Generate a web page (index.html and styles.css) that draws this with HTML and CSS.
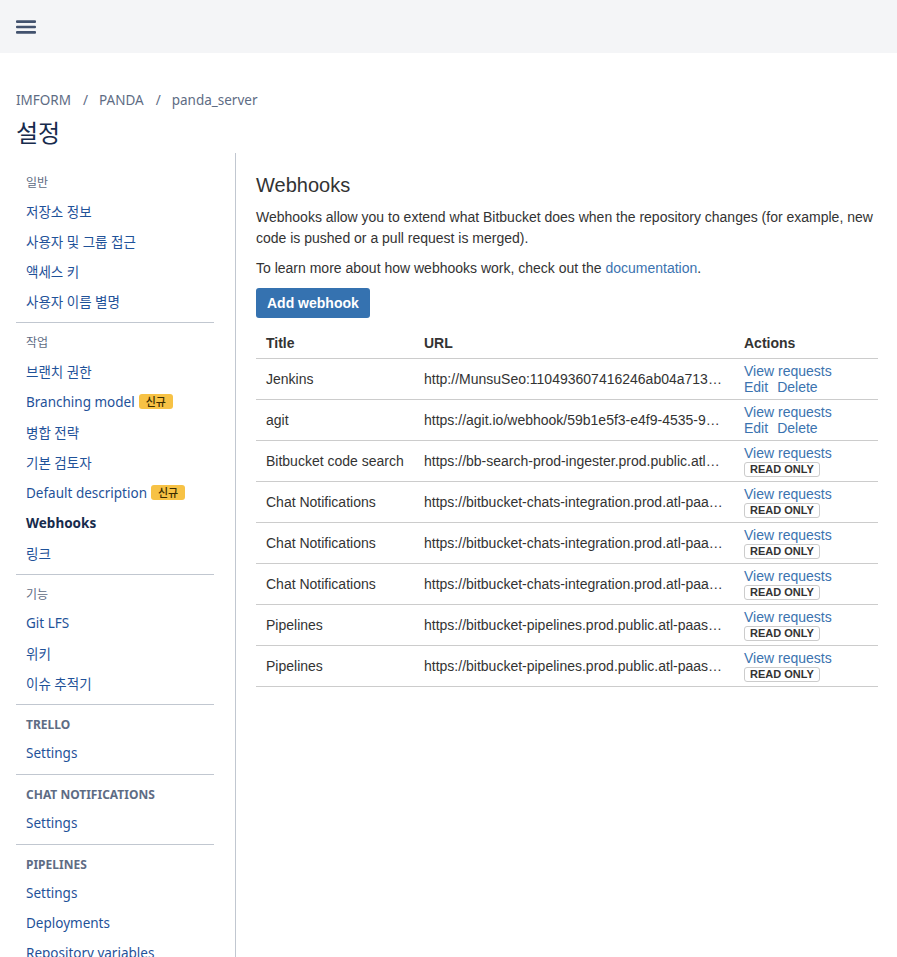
FILE: index.html
```html
<!DOCTYPE html>
<html lang="ko">
<head>
<meta charset="utf-8">
<title>설정 - Webhooks</title>
<link rel="stylesheet" href="styles.css">
</head>
<body>
<header class="topbar">
  <button class="menu-btn" aria-label="menu">
    <svg width="20" height="14" viewBox="0 0 20 14"><rect x="0" y="0.3" width="20" height="2.6" rx="1"/><rect x="0" y="5.7" width="20" height="2.6" rx="1"/><rect x="0" y="11.1" width="20" height="2.6" rx="1"/></svg>
  </button>
</header>
<div class="page">
  <nav class="breadcrumb">
    <a href="#">IMFORM</a><span class="sep">/</span><a href="#">PANDA</a><span class="sep">/</span><a href="#">panda_server</a>
  </nav>
  <h1 class="page-title">설정</h1>
  <div class="layout">
    <aside class="sidebar">
      <div class="nav-group">
        <div class="nav-heading ko">일반</div>
        <a class="nav-item" href="#">저장소 정보</a>
        <a class="nav-item" href="#">사용자 및 그룹 접근</a>
        <a class="nav-item" href="#">액세스 키</a>
        <a class="nav-item" href="#">사용자 이름 별명</a>
      </div>
      <div class="nav-group">
        <div class="nav-heading ko">작업</div>
        <a class="nav-item" href="#">브랜치 권한</a>
        <a class="nav-item with-lozenge" href="#">Branching model <span class="lozenge">신규</span></a>
        <a class="nav-item" href="#">병합 전략</a>
        <a class="nav-item" href="#">기본 검토자</a>
        <a class="nav-item with-lozenge" href="#">Default description <span class="lozenge">신규</span></a>
        <a class="nav-item active" href="#">Webhooks</a>
        <a class="nav-item" href="#">링크</a>
      </div>
      <div class="nav-group">
        <div class="nav-heading ko">기능</div>
        <a class="nav-item" href="#">Git LFS</a>
        <a class="nav-item" href="#">위키</a>
        <a class="nav-item" href="#">이슈 추적기</a>
      </div>
      <div class="nav-group">
        <div class="nav-heading">TRELLO</div>
        <a class="nav-item" href="#">Settings</a>
      </div>
      <div class="nav-group">
        <div class="nav-heading">CHAT NOTIFICATIONS</div>
        <a class="nav-item" href="#">Settings</a>
      </div>
      <div class="nav-group">
        <div class="nav-heading">PIPELINES</div>
        <a class="nav-item" href="#">Settings</a>
        <a class="nav-item" href="#">Deployments</a>
        <a class="nav-item" href="#">Repository variables</a>
      </div>
    </aside>
    <main class="content">
      <h2 class="content-title">Webhooks</h2>
      <p>Webhooks allow you to extend what Bitbucket does when the repository changes (for example, new code is pushed or a pull request is merged).</p>
      <p>To learn more about how webhooks work, check out the <a href="#">documentation</a>.</p>
      <button class="btn-primary">Add webhook</button>
      <table class="hooks">
        <colgroup><col class="c-title"><col class="c-url"><col class="c-actions"></colgroup>
        <thead>
          <tr><th>Title</th><th>URL</th><th>Actions</th></tr>
        </thead>
        <tbody>
          <tr><td>Jenkins</td><td>http://MunsuSeo:110493607416246ab04a71339a5e2c1d0f@jenkins.example.com/bitbucket-hook/</td><td><a class="act" href="#">View requests</a><span class="act-row"><a href="#">Edit</a><a href="#">Delete</a></span></td></tr>
          <tr><td>agit</td><td>https://agit.io/webhook/59b1e5f3-e4f9-4535-9a2b-4b6c1d8e0f21</td><td><a class="act" href="#">View requests</a><span class="act-row"><a href="#">Edit</a><a href="#">Delete</a></span></td></tr>
          <tr><td>Bitbucket code search</td><td>https://bb-search-prod-ingester.prod.public.atl-paas.net/webhook</td><td><a class="act" href="#">View requests</a><span class="act-row"><span class="readonly">READ ONLY</span></span></td></tr>
          <tr><td>Chat Notifications</td><td>https://bitbucket-chats-integration.prod.atl-paas.net/webhook</td><td><a class="act" href="#">View requests</a><span class="act-row"><span class="readonly">READ ONLY</span></span></td></tr>
          <tr><td>Chat Notifications</td><td>https://bitbucket-chats-integration.prod.atl-paas.net/webhook</td><td><a class="act" href="#">View requests</a><span class="act-row"><span class="readonly">READ ONLY</span></span></td></tr>
          <tr><td>Chat Notifications</td><td>https://bitbucket-chats-integration.prod.atl-paas.net/webhook</td><td><a class="act" href="#">View requests</a><span class="act-row"><span class="readonly">READ ONLY</span></span></td></tr>
          <tr><td>Pipelines</td><td>https://bitbucket-pipelines.prod.public.atl-paas.net/webhook</td><td><a class="act" href="#">View requests</a><span class="act-row"><span class="readonly">READ ONLY</span></span></td></tr>
          <tr><td>Pipelines</td><td>https://bitbucket-pipelines.prod.public.atl-paas.net/webhook</td><td><a class="act" href="#">View requests</a><span class="act-row"><span class="readonly">READ ONLY</span></span></td></tr>
        </tbody>
      </table>
    </main>
  </div>
</div>
</body>
</html>
```
FILE: styles.css
```css
* { box-sizing: border-box; }
html, body { margin: 0; padding: 0; background: #fff; }
body {
  font-family: "Noto Sans", "Noto Sans CJK KR", sans-serif;
  color: #172b4d;
  overflow: hidden;
}
a { text-decoration: none; }

.topbar {
  height: 53px;
  background: #f4f5f7;
  display: flex;
  align-items: center;
  padding-left: 16px;
}
.menu-btn {
  border: 0;
  background: none;
  padding: 0;
  width: 20px;
  height: 14px;
  display: flex;
  fill: #42526e;
}

.page { padding: 37px 16px 0 16px; }

.breadcrumb {
  font-size: 13.5px;
  line-height: 20px;
  height: 20px;
  display: flex;
}
.breadcrumb a { color: #5e6c84; }
.breadcrumb .sep { color: #5e6c84; padding: 0 11px 0 12px; }

.page-title {
  margin: 7px 0 4px 0;
  font-size: 24px;
  line-height: 32px;
  font-weight: 400;
  color: #172b4d;
}

.layout { display: flex; align-items: stretch; min-height: 820px; }

.sidebar {
  width: 220px;
  flex: none;
  padding: 0 21px 0 0;
  border-right: 1px solid #c1c7d0;
}
.nav-group {
  padding: 11px 0 6px 10px;
  border-top: 1px solid #c1c7d0;
}
.nav-group:first-child { border-top: 0; padding-top: 21px; }
.nav-heading {
  font-size: 12px;
  line-height: 18px;
  margin-bottom: 4px;
  color: #5e6c84;
  font-weight: 700;
}
.nav-heading.ko { font-weight: 400; }
.nav-item {
  display: flex;
  align-items: center;
  height: 30px;
  font-size: 13.5px;
  color: #1f5299;
  white-space: nowrap;
}
.nav-item.with-lozenge { height: 31px; }
.nav-item.active { color: #172b4d; font-weight: 700; }
.lozenge {
  display: inline-block;
  margin-left: 4px;
  background: #f7c245;
  color: #3a2c00;
  border-radius: 3px;
  font-size: 11px;
  line-height: 15px;
  padding: 0 7px;
  font-weight: 500;
}

.content {
  flex: 1;
  padding: 20px 19px 0 20px;
  font-family: "Liberation Sans", Arial, sans-serif;
  color: #333;
  font-size: 14px;
}
.content a { color: #3b73af; }
.content-title {
  margin: 0 0 10px 0;
  font-size: 20px;
  line-height: 24px;
  font-weight: 400;
  color: #333;
}
.content p { margin: 0 0 9px 0; line-height: 21px; }
.btn-primary {
  display: block;
  margin: 0 0 10px 0;
  height: 30px;
  padding: 0 11px;
  border: 0;
  border-radius: 3px;
  background: #3572b0;
  color: #fff;
  font-family: "Liberation Sans", Arial, sans-serif;
  font-size: 14px;
  font-weight: 700;
}

.hooks {
  width: 100%;
  border-collapse: collapse;
  table-layout: fixed;
}
.c-title { width: 158px; }
.c-url { width: 320px; }
.c-actions { width: 144px; }
.hooks th {
  text-align: left;
  font-weight: 700;
  height: 30px;
  padding: 0 10px;
  border-bottom: 1px solid #ccc;
  color: #333;
}
.hooks td {
  padding: 4px 10px 4px 10px;
  height: 41px;
  line-height: 16px;
  border-bottom: 1px solid #ccc;
  white-space: nowrap;
  overflow: hidden;
  text-overflow: ellipsis;
  vertical-align: middle;
}
.hooks td:last-child { text-overflow: clip; }
.act { display: block; height: 16px; }
.act-row { display: flex; gap: 9px; height: 16px; align-items: flex-start; }
.readonly {
  display: block;
  border: 1px solid #ccc;
  border-radius: 3px;
  font-size: 11px;
  font-weight: 700;
  line-height: 13px;
  padding: 0 5px;
  color: #333;
  margin-top: 1px;
}
```
